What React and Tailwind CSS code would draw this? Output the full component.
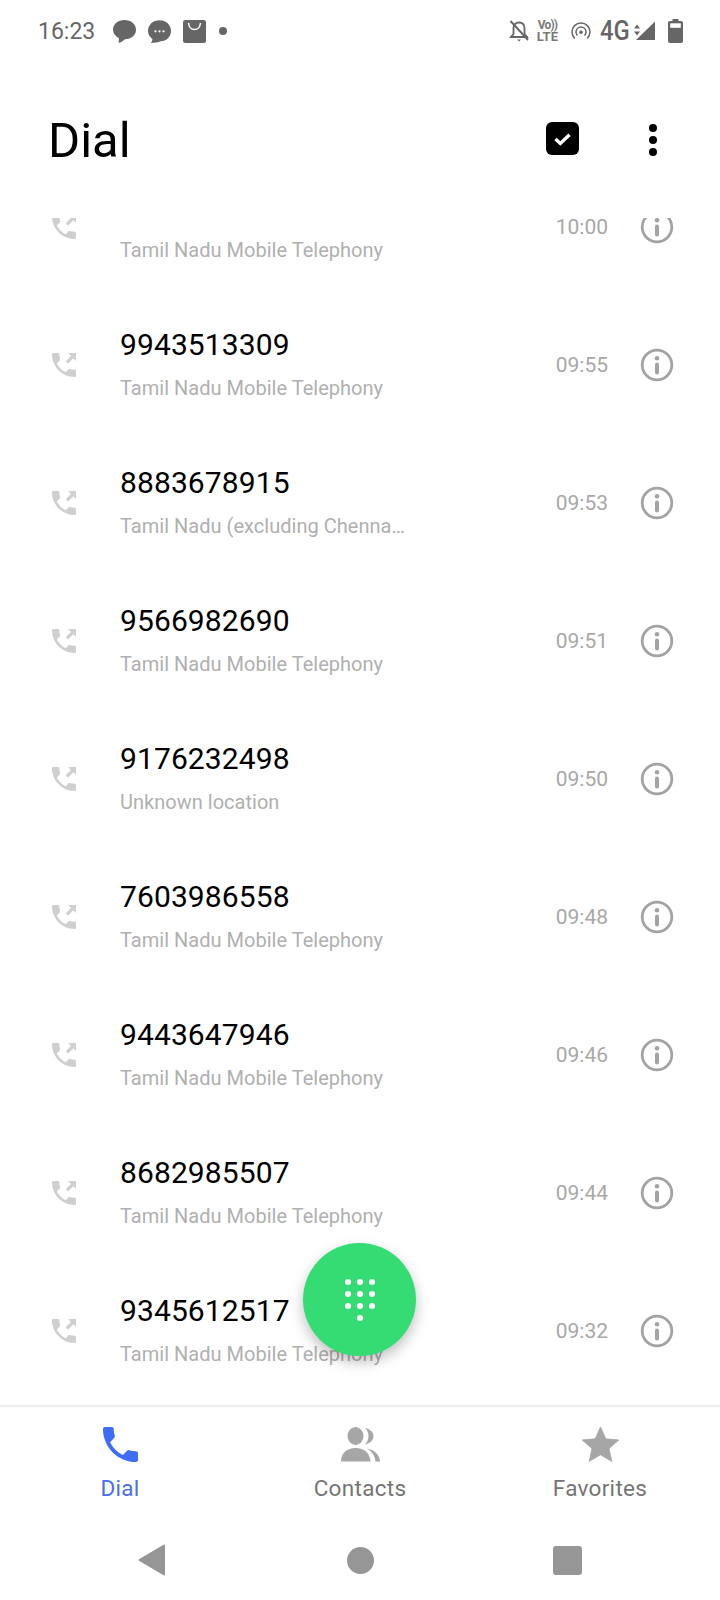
const CALL = "M6.62 10.79c1.44 2.83 3.76 5.14 6.59 6.59l2.2-2.2c.27-.27.67-.36 1.02-.24 1.12.37 2.33.57 3.57.57.55 0 1 .45 1 1V20c0 .55-.45 1-1 1-9.39 0-17-7.61-17-17 0-.55.45-1 1-1h3.5c.55 0 1 .45 1 1 0 1.25.2 2.45.57 3.57.11.35.03.74-.25 1.02l-2.2 2.2z";

const rows = [
  { n: "\u00a0", s: "Tamil Nadu Mobile Telephony", t: "10:00" },
  { n: "9943513309", s: "Tamil Nadu Mobile Telephony", t: "09:55" },
  { n: "8883678915", s: "Tamil Nadu (excluding Chenna…", t: "09:53" },
  { n: "9566982690", s: "Tamil Nadu Mobile Telephony", t: "09:51" },
  { n: "9176232498", s: "Unknown location", t: "09:50" },
  { n: "7603986558", s: "Tamil Nadu Mobile Telephony", t: "09:48" },
  { n: "9443647946", s: "Tamil Nadu Mobile Telephony", t: "09:46" },
  { n: "8682985507", s: "Tamil Nadu Mobile Telephony", t: "09:44" },
  { n: "9345612517", s: "Tamil Nadu Mobile Telephony", t: "09:32" },
];

function OutCall() {
  return (
    <svg width="24" height="24" viewBox="3 3 18 18" className="shrink-0">
      <path d={CALL} fill="#cfcfcf" />
      <path d="M13 11 20 4" stroke="#fff" strokeWidth="5" fill="none" />
      <path d="M14.200 10 18.500 5.700" stroke="#cfcfcf" strokeWidth="2.500" fill="none" />
      <path d="M15 3H21V9Z" fill="#cfcfcf" />
    </svg>
  );
}

function Info() {
  return (
    <svg width="34" height="34" viewBox="0 0 34 34" className="shrink-0">
      <circle cx="17" cy="17" r="14.8" fill="none" stroke="#a3a3a3" strokeWidth="2.800" />
      <circle cx="17" cy="10.200" r="2.300" fill="#a3a3a3" />
      <rect x="15" y="14.500" width="4" height="12" rx="2" fill="#a3a3a3" />
    </svg>
  );
}

function Row({ n, s, t }) {
  return (
    <div className="flex h-[138px] shrink-0 items-center pl-[52px] pr-[46px]">
      <OutCall />
      <div className="ml-[44px] flex w-[290px] flex-col pb-[2px]">
        <div className="text-[30px] leading-[36px] tracking-[0.1px] text-black">{n}</div>
        <div className="mt-[12px] truncate text-[20px] leading-[26px] tracking-[0.02px] text-[#b0b0b0]">{s}</div>
      </div>
      <div className="ml-auto mr-[32px] pt-[2px] text-[21px] text-[#a8a8a8]">{t}</div>
      <Info />
    </div>
  );
}

function StatusLeft() {
  const g = "#666666";
  return (
    <div className="flex items-center">
      <span className="text-[23px] leading-none text-[#666666]">16:23</span>
      <svg width="23" height="23" viewBox="0 0 23 23" className="ml-[18px]">
        <path d="M11.5 0C18 0 23 4 23 9.7 23 15 18.4 19 12 19.2 10 21 7.500 22.500 5.500 23 6 21.500 6 19.500 5.800 18 2.300 16.300 0 13.300 0 9.700 0 4 5 0 11.500 0Z" fill={g} />
      </svg>
      <svg width="23" height="23" viewBox="0 0 23 23" className="ml-[12px]">
        <path d="M11.500 0.300C18 0.300 23 5 23 11 23 17 18.500 21 12.500 21.300 10.500 22.500 6.500 23 2.800 23 4 21.800 4.400 20.300 4.400 19 1.700 17 0 14.200 0 11 0 5 5 0.300 11.500 0.300Z" fill={g} />
        <circle cx="7.500" cy="11.300" r="1.100" fill="#fff" />
        <circle cx="11.500" cy="11.300" r="1.100" fill="#fff" />
        <circle cx="15.500" cy="11.300" r="1.100" fill="#fff" />
      </svg>
      <svg width="23" height="23" viewBox="0 0 23 23" className="ml-[12px]">
        <rect width="23" height="23" rx="2.500" fill={g} />
        <path d="M5.500 3C6 7.500 8 9.500 11.500 9.500 15 9.500 17 7.500 17.500 3" fill="none" stroke="#fff" strokeWidth="1.500" />
      </svg>
      <span className="ml-[13px] h-[8px] w-[8px] rounded-full bg-[#666666]" />
    </div>
  );
}

function StatusRight() {
  const g = "#666666";
  return (
    <div className="flex items-center">
      <svg width="20" height="22" viewBox="0 0 20 22">
        <path d="M10 2.500C13.500 2.500 15.500 5 15.500 8.500V14L18 17H2L4.500 14V8.500C4.500 5 6.500 2.500 10 2.500Z" fill="none" stroke={g} strokeWidth="1.800" />
        <rect x="1" y="16.300" width="18" height="1.700" fill={g} />
        <path d="M8 19.500H12L10 21.500Z" fill={g} />
        <path d="M1.500 1 19 20" stroke={g} strokeWidth="1.900" />
      </svg>
      <div className="ml-[8px] flex w-[21px] flex-col items-center overflow-visible whitespace-nowrap font-bold leading-none text-[#7a7a7a]">
        <span className="text-[12px] leading-[11px] tracking-[-0.8px]">Vo))</span>
        <span className="text-[13px] leading-[12px] tracking-[0.2px]">LTE</span>
      </div>
      <svg width="20" height="18" viewBox="0 0 20 18" className="ml-[13px]">
        <path d="M3.800 16.500C1.900 14.500 1 12 1 10 1 5 5 1 10 1 15 1 19 5 19 10 19 12 18.100 14.500 16.200 16.500" fill="none" stroke={g} strokeWidth="1.500" />
        <path d="M6.500 13.500C5.500 12.500 5 11 5 10 5 7.200 7.200 5 10 5 12.800 5 15 7.200 15 10 15 11 14.500 12.500 13.500 13.500" fill="none" stroke={g} strokeWidth="1.500" />
        <circle cx="10" cy="10.200" r="1.800" fill={g} />
      </svg>
      <span className="ml-[9px] inline-block w-[27px] origin-left scale-x-[0.85] text-[28px] font-medium leading-none text-[#666666]">4G</span>
      <svg width="22" height="20" viewBox="0 0 22 20" className="ml-[7px]">
        <path d="M3 2.500 6 6.500H0Z M3 13.500 0 9.500H6Z" fill={g} transform="translate(0 1)" />
        <path d="M21 0.500V19H2Z" fill={g} />
      </svg>
      <svg width="15" height="24" viewBox="0 0 15 24" className="ml-[12px]">
        <path d="M4.500 0H10.500V2H13C14.100 2 15 2.900 15 4V22C15 23.100 14.100 24 13 24H2C0.900 24 0 23.100 0 22V4C0 2.900 0.900 2 2 2H4.500Z" fill={g} />
        <rect x="2.200" y="4.300" width="10.600" height="4.500" fill="#fff" />
      </svg>
    </div>
  );
}

function Tab({ label, active, children }) {
  return (
    <div className="flex flex-col items-center">
      <div className="flex h-[35px] items-center justify-center">{children}</div>
      <div className={"mt-[11px] text-[22.5px] leading-[30px] tracking-[0.3px] " + (active ? "text-[#4a6ef0]" : "text-[#757575]")}>{label}</div>
    </div>
  );
}

export default function App() {
  return (
    <div className="relative flex h-[1600px] w-[720px] flex-col overflow-hidden bg-white font-['Roboto',sans-serif]">
      <div className="flex h-[62px] shrink-0 items-center justify-between pl-[38px] pr-[37px]">
        <StatusLeft />
        <StatusRight />
      </div>

      <div className="flex h-[156px] shrink-0 items-center pl-[48px] pr-[63px]">
        <h1 className="text-[49px] font-normal leading-none text-black">Dial</h1>
        <svg width="33" height="33" viewBox="0 0 33 33" className="ml-auto mb-[4px]">
          <rect width="33" height="33" rx="6" fill="#000" />
          <path d="M9.500 17 14.300 21.500 23.500 12.800" fill="none" stroke="#fff" strokeWidth="3.400" />
        </svg>
        <div className="ml-[70px] flex w-[8px] flex-col gap-[4px]">
          <span className="h-[8px] w-[8px] rounded-full bg-black" />
          <span className="h-[8px] w-[8px] rounded-full bg-black" />
          <span className="h-[8px] w-[8px] rounded-full bg-black" />
        </div>
      </div>

      <div className="flex min-h-0 flex-1 flex-col overflow-hidden">
        <div className="mt-[-60px] flex flex-col">
          {rows.map((r) => (
            <Row key={r.t} {...r} />
          ))}
        </div>
      </div>

      <div className="h-[2px] shrink-0 bg-[#eeeeee]" />

      <div className="grid h-[115px] shrink-0 grid-cols-3 pt-[20px]">
        <Tab label="Dial" active>
          <svg width="35" height="35" viewBox="3 3 18 18"><path d={CALL} fill="#3f6df5" /></svg>
        </Tab>
        <Tab label="Contacts">
          <svg width="40" height="35" viewBox="0 0 40 35">
            <ellipse cx="15.500" cy="9" rx="8" ry="9" fill="#a6a6a6" />
            <path d="M1 34.500C1 26 7 21 15.500 21 24 21 30 26 30.500 34.500Z" fill="#a6a6a6" />
            <path d="M25 1C30 2 33.500 5 33.500 9 33.500 13 30 16.500 25 17.500 27.500 15 28.500 12 28.500 9 28.500 6 27.500 3 25 1Z" fill="#a6a6a6" />
            <path d="M27 21.500C34 23 39.500 27 40 34.500H35.500C35 29 32 24.500 27 21.500Z" fill="#a6a6a6" />
          </svg>
        </Tab>
        <Tab label="Favorites">
          <svg width="37" height="35" viewBox="0 0 37 35">
            <path d="M18.500 0 23.800 11.800 36.800 13 27 21.600 29.900 34.500 18.500 27.800 7.100 34.500 10 21.600 0.200 13 13.200 11.800Z" fill="#a6a6a6" stroke="#a6a6a6" strokeWidth="0.800" strokeLinejoin="round" />
          </svg>
        </Tab>
      </div>

      <div className="grid h-[78px] shrink-0 grid-cols-[1fr_1fr_1fr] items-center pb-[2px]">
        <div className="flex justify-end pr-[74px]">
          <svg width="28" height="32" viewBox="0 0 28 32">
            <path d="M26 1.500V30.500L1.500 16Z" fill="#969696" stroke="#969696" strokeWidth="2" strokeLinejoin="round" />
          </svg>
        </div>
        <div className="flex justify-center">
          <span className="h-[27px] w-[27px] rounded-full bg-[#969696]" />
        </div>
        <div className="flex justify-start pl-[73px]">
          <span className="h-[29px] w-[29px] rounded-[3px] bg-[#969696]" />
        </div>
      </div>

      <div className="absolute left-[303px] top-[1243px] flex h-[113px] w-[113px] items-center justify-center rounded-full bg-[#35dc74] shadow-[0_6px_14px_rgba(0,0,0,0.25)]">
        <div className="grid grid-cols-3 gap-x-[6px] gap-y-[6px]">
          {[0, 1, 2, 3, 4, 5, 6, 7, 8].map((i) => (
            <span key={i} className="h-[6px] w-[6px] rounded-full bg-white" />
          ))}
          <span className="col-start-2 h-[6px] w-[6px] rounded-full bg-white" />
        </div>
      </div>
    </div>
  );
}
